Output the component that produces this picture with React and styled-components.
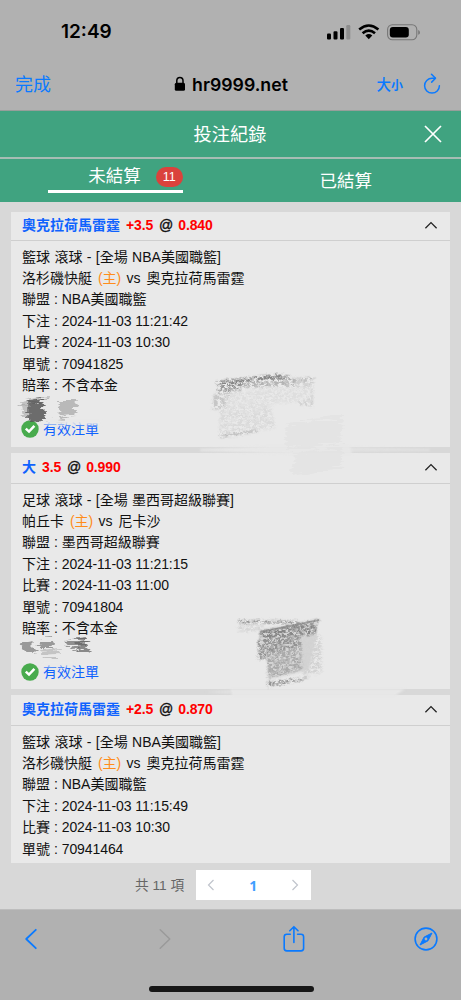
import React from "react";
import styled, { createGlobalStyle } from "styled-components";

const bets = [
  {
    team: "奧克拉荷馬雷霆",
    point: "+3.5",
    odds: "0.840",
    sport: "籃球 滾球 - [全場 NBA美國職籃]",
    home: "洛杉磯快艇",
    away: "奧克拉荷馬雷霆",
    league: "NBA美國職籃",
    betTime: "2024-11-03 11:21:42",
    gameTime: "2024-11-03 10:30",
    number: "70941825",
    head: 29,
    height: 235,
    full: true,
  },
  {
    team: "大",
    point: "3.5",
    odds: "0.990",
    sport: "足球 滾球 - [全場 墨西哥超級聯賽]",
    home: "帕丘卡",
    away: "尼卡沙",
    league: "墨西哥超級聯賽",
    betTime: "2024-11-03 11:21:15",
    gameTime: "2024-11-03 11:00",
    number: "70941804",
    head: 31,
    height: 236,
    full: true,
  },
  {
    team: "奧克拉荷馬雷霆",
    point: "+2.5",
    odds: "0.870",
    sport: "籃球 滾球 - [全場 NBA美國職籃]",
    home: "洛杉磯快艇",
    away: "奧克拉荷馬雷霆",
    league: "NBA美國職籃",
    betTime: "2024-11-03 11:15:49",
    gameTime: "2024-11-03 10:30",
    number: "70941464",
    head: 31,
    height: 168,
    full: false,
  },
];

const Chevron = () => (
  <svg width="14" height="9" viewBox="0 0 14 9">
    <path d="M1.4 7.2 L7 1.6 L12.6 7.2" fill="none" stroke="#222" strokeWidth="1.3" />
  </svg>
);

const Check = () => (
  <svg width="18" height="18" viewBox="0 0 18 18">
    <circle cx="9" cy="9" r="8.7" fill="#48ab4d" />
    <path d="M4.8 8.6 L8 11.6 L13.4 5.8" fill="none" stroke="#fff" strokeWidth="2.5" />
  </svg>
);

const BetCard = ({ bet }) => (
  <Card $height={bet.height}>
    <CardHead $height={bet.head}>
      <Pick>
        <Team>{bet.team}</Team>
        <Odds>{bet.point}</Odds>
        <At>@</At>
        <Odds>{bet.odds}</Odds>
      </Pick>
      <Chevron />
    </CardHead>
    <CardBody>
      <Line $wide>{bet.sport}</Line>
      <Line>
        {bet.home} <Home>(主)</Home> vs <Away>{bet.away}</Away>
      </Line>
      <Line>聯盟 : {bet.league}</Line>
      <Line>
        下注 : <Digits>{bet.betTime}</Digits>
      </Line>
      <Line>
        比賽 : <Digits>{bet.gameTime}</Digits>
      </Line>
      <Line>
        單號 : <Digits>{bet.number}</Digits>
      </Line>
      {bet.full && <Line>賠率 : 不含本金</Line>}
      {bet.full && (
        <Valid>
          <Check />
          <span>有效注單</span>
        </Valid>
      )}
    </CardBody>
  </Card>
);

// pencil marks rubbed over the amounts
const Scribbles = () => (
  <Marks width="461" height="708" viewBox="0 202 461 708">
    <defs>
      <filter id="grain" x="-20%" y="-20%" width="140%" height="140%">
        <feTurbulence type="fractalNoise" baseFrequency="0.28 0.45" numOctaves="3" seed="7" result="n" />
        <feColorMatrix in="n" type="matrix" values="0 0 0 0 0  0 0 0 0 0  0 0 0 0 0  0 0 0 3.6 -1.2" result="a" />
        <feGaussianBlur in="SourceGraphic" stdDeviation="0.8" result="s" />
        <feComposite in="s" in2="a" operator="in" result="g" />
        <feDisplacementMap in="g" in2="n" scale="4" xChannelSelector="G" yChannelSelector="B" result="d" />
        <feGaussianBlur in="d" stdDeviation="0.45" />
      </filter>
      <filter id="soft" x="-30%" y="-30%" width="160%" height="160%">
        <feTurbulence type="fractalNoise" baseFrequency="0.05 0.4" numOctaves="3" seed="3" result="n" />
        <feDisplacementMap in="SourceGraphic" in2="n" scale="14" xChannelSelector="R" yChannelSelector="G" result="d" />
        <feGaussianBlur in="d" stdDeviation="0.7" />
      </filter>
      <filter id="fade" x="-20%" y="-80%" width="140%" height="260%">
        <feGaussianBlur stdDeviation="1.2" />
      </filter>
    </defs>
    <g fill="#e7e7e7" filter="url(#fade)">
      <path d="M200 449 L270 446 L350 446 L352 454 L290 454 L200 451 Z" />
      <path d="M350 447 L430 449 L430 451 L350 452 Z" opacity=".6" />
      <path d="M230 689 L405 689 L395 696 L232 696 Z" />
      <path d="M205 692 L230 690 L230 694 Z" opacity=".6" />
    </g>
    <path d="M260 630 L318 620 L314 648 L309 670 L269 679 L267 657 L259 658 Z" fill="#b4b4b4" opacity=".4" filter="url(#fade)" />
    <g filter="url(#grain)">
      <path d="M217 382 L242 379 L240 391 L218 393 Z" fill="#999" />
      <path d="M217 381 L276 374 L290 376 L290 379 L240 385 L218 386 Z" fill="#858585" />
      <path d="M242 382 L314 377 L312 385 L244 388 Z" fill="#b4b4b4" />
      <path d="M296 381 L313 380 L313 407 L298 404 Z" fill="#cdcdcd" />
      <path d="M214 393 L312 386 L311 400 L230 410 L213 410 Z" fill="#dedede" />
      <path d="M213 395 L230 393 L226 408 L212 410 Z" fill="#c6c6c6" />
      <path d="M220 409 L270 406 L276 428 L219 437 Z" fill="#dadada" />
      <path d="M220 435 L256 430 L258 432 L220 438 Z" fill="#b8b8b8" />
      <path d="M238 620 L297 621 L300 623.5 L239 623.5 Z" fill="#858585" />
      <path d="M237 626 L264 625 L262 631 L239 632 Z" fill="#d6d6d6" />
      <path d="M261 631 L317 623 L316 634 L260 642 Z" fill="#868686" />
      <path d="M258 640 L308 632 L306 651 L258 660 Z" fill="#939393" />
      <path d="M267 653 L309 646 L308 668 L268 679 Z" fill="#aaa" />
      <path d="M300 636 L321 635 L322 673 L303 675 Z" fill="#d2d2d2" />
      <path d="M267 682 L310 677 L300 681 L268 687 Z" fill="#909090" />
    </g>
    <path d="M260 632 L319 619 L319 622 L300 626 L261 633 Z" fill="#707070" opacity=".75" filter="url(#grain)" />
    <path d="M260 632 L300 624 L319 620" fill="none" stroke="#808080" strokeWidth="2" opacity=".6" />
    <g fill="#dfdfdf" filter="url(#soft)" opacity=".5">
      <path d="M287 424 L342 415 L340 443 L285 450 Z" />
      <path d="M294 455 L344 445 L341 467 L292 476 Z" />
    </g>
    <g filter="url(#soft)">
      <path d="M18 402 L47 397 L46 400 L22 405 Z" fill="#bbb" />
      <path d="M28 402 L42 399 L45 420 L28 421 Z" fill="#555" opacity=".85" />
      <path d="M22 404 L30 403 L30 419 L24 419 Z" fill="#999" opacity=".5" />
      <path d="M58 400 L77 400 L75 416 L60 417 Z" fill="#aaa" opacity=".75" />
      <path d="M49 422 L67 418 L67 420 L49 423 Z" fill="#bbb" />
      <path d="M19 645 L31 643 L39 651 L28 652 Z" fill="#999" />
      <path d="M39 640 L52 639 L53 649 L41 649 Z" fill="#999" />
      <path d="M40 651 L61 649 L58 655 L43 656 Z" fill="#c4c4c4" />
      <path d="M64 641 L86 638 L87 647 L72 648 Z" fill="#909090" />
      <path d="M77 640 L88 640 L90 654 L79 650 Z" fill="#606060" opacity=".7" />
    </g>
    <path d="M42 421 L101 421 L101 425 L42 425 Z" fill="#e9e9e9" opacity=".9" filter="url(#fade)" />
    <path d="M42 662 L75 662 L75 667 L42 668 Z" fill="#e9e9e9" opacity=".6" filter="url(#fade)" />
  </Marks>
);

const App = () => {
  return (
    <Phone>
      <GlobalStyle />
      <StatusBar>
        <Time>12:49</Time>
        <svg width="96" height="20" viewBox="0 0 96 20">
          <g>
            <rect x="1" y="11.6" width="4" height="6" rx="1.1" />
            <rect x="7.5" y="9.3" width="4" height="8.3" rx="1.1" />
            <rect x="14" y="6.1" width="4" height="11.5" rx="1.1" />
            <rect x="20.3" y="3.1" width="4" height="14.5" rx="1.1" fill="#8d8d8d" />
          </g>
          <g fill="none" stroke="#000" strokeWidth="2.6">
            <path d="M33.2 7.5 Q42.8 -0.5 52.4 7.5" />
            <path d="M36.6 11.3 Q42.8 5.9 49 11.3" />
          </g>
          <path d="M39.3 13.5 Q42.8 10.6 46.3 13.5 L42.8 17.3 Z" />
          <rect x="61.6" y="2.8" width="29.2" height="15" rx="4.7" fill="none" stroke="#777" strokeWidth="1.1" />
          <rect x="63.8" y="5" width="19" height="10.6" rx="3" />
          <path d="M92.2 7.9 Q94 8.7 94 10.4 Q94 12 92.2 12.8 Z" fill="#777" />
        </svg>
      </StatusBar>
      <AddressBar>
        <Done>完成</Done>
        <Url>
          <svg width="12" height="16" viewBox="0 0 12 16">
            <rect x="0.8" y="6.8" width="10.2" height="8" rx="1.5" />
            <path d="M2.8 8 V4.8 Q2.8 1.4 5.9 1.4 Q9 1.4 9 4.8 V8" fill="none" stroke="#000" strokeWidth="1.5" />
          </svg>
          hr9999.net
        </Url>
        <Tools>
          <TextSize>
            大<small>小</small>
          </TextSize>
          <svg width="18" height="22" viewBox="0 0 18 22" fill="none" stroke="#0a7aff" strokeWidth="1.5" strokeLinecap="round" strokeLinejoin="round">
            <path d="M12.3 5.3 H9 A7.4 7.4 0 1 0 16.4 12.7" />
            <path d="M8.5 1.2 L12.5 5.3 L8.7 9.1" />
          </svg>
        </Tools>
      </AddressBar>
      <TitleBar>
        <h1>投注紀錄</h1>
        <svg width="18" height="18" viewBox="0 0 18 18">
          <path d="M1 1 L17 17 M17 1 L1 17" stroke="#fff" strokeWidth="1.7" />
        </svg>
      </TitleBar>
      <Tabs>
        <Tab $active>
          <TabLabel $active>
            未結算<Badge>11</Badge>
          </TabLabel>
        </Tab>
        <Tab>
          <TabLabel>已結算</TabLabel>
        </Tab>
      </Tabs>
      <List>
        {bets.map((bet) => (
          <BetCard key={bet.number} bet={bet} />
        ))}
        <Pagination>
          <Total>共 11 項</Total>
          <Pager>
            <svg width="8" height="12" viewBox="0 0 8 12">
              <path d="M6.5 1 L1.5 6 L6.5 11" fill="none" stroke="#c0c4cc" strokeWidth="1.2" />
            </svg>
            <b>1</b>
            <svg width="8" height="12" viewBox="0 0 8 12">
              <path d="M1.5 1 L6.5 6 L1.5 11" fill="none" stroke="#c0c4cc" strokeWidth="1.2" />
            </svg>
          </Pager>
        </Pagination>
        <Scribbles />
      </List>
      <BottomBar>
        <Actions>
          <svg width="14" height="22" viewBox="0 0 14 22">
            <path d="M11.8 1.8 L2.2 11 L11.8 20.2" fill="none" stroke="#0a7aff" strokeWidth="1.8" strokeLinecap="round" strokeLinejoin="round" />
          </svg>
          <svg width="14" height="22" viewBox="0 0 14 22">
            <path d="M2.2 1.8 L11.8 11 L2.2 20.2" fill="none" stroke="#9a9a9a" strokeWidth="1.5" strokeLinecap="round" strokeLinejoin="round" />
          </svg>
          <svg width="22" height="28" viewBox="0 0 22 28" fill="none" stroke="#0a7aff" strokeWidth="1.6" strokeLinecap="round" strokeLinejoin="round">
            <path d="M7.3 9.2 H3.8 Q1.2 9.2 1.2 11.8 V23.3 Q1.2 25.9 3.8 25.9 H18 Q20.6 25.9 20.6 23.3 V11.8 Q20.6 9.2 18 9.2 H14.6" />
            <path d="M10.9 17.4 V2 M6.8 5.8 L10.9 1.7 L15 5.8" />
          </svg>
          <svg width="24" height="24" viewBox="0 0 24 24">
            <circle cx="12" cy="12" r="10.9" fill="none" stroke="#0a7aff" strokeWidth="1.6" />
            <path d="M18 6 L13.9 13.9 L6 18 L10.1 10.1 Z" fill="#0a7aff" stroke="#0a7aff" strokeLinejoin="round" />
            <circle cx="12" cy="12" r="1.4" fill="#b1b1b1" />
          </svg>
        </Actions>
        <HomeBar />
      </BottomBar>
    </Phone>
  );
};

export default App;

const GlobalStyle = createGlobalStyle`
  body {
    margin: 0;
    background: #b1b1b1;
  }

  * {
    box-sizing: border-box;
  }

  svg {
    display: block;
    flex: none;
  }
`;

const Phone = styled.div`
  display: flex;
  flex-direction: column;
  width: 461px;
  height: 1000px;
  overflow: hidden;
  background: #b1b1b1;
  color: #111;
  font-family: "Liberation Sans", "Noto Sans CJK TC", sans-serif;
`;

const StatusBar = styled.div`
  display: flex;
  justify-content: space-between;
  align-items: center;
  height: 62px;
  padding: 1px 35px 0 61px;

  svg {
    margin-right: 4px;
  }
`;

const Time = styled.div`
  font: 600 19px Inter, sans-serif;
  color: #000;
`;

const AddressBar = styled.div`
  display: grid;
  grid-template-columns: 1fr auto 1fr;
  align-items: center;
  height: 49px;
  padding: 0 20px 4px 15px;
  border-bottom: 1px solid #969e9a;
`;

const Done = styled.div`
  padding-bottom: 2px;
  color: #0a7aff;
  font-size: 18px;
`;

const Url = styled.div`
  display: flex;
  align-items: center;
  gap: 6px;
  padding-left: 6px;
  font: 600 17.7px Inter, sans-serif;
  color: #000;
`;

const Tools = styled.div`
  display: flex;
  justify-content: flex-end;
  align-items: center;
  gap: 20px;
`;

const TextSize = styled.div`
  padding-bottom: 1px;
  color: #0a7aff;
  font-size: 14.5px;
  font-weight: 500;

  small {
    font-size: 12px;
    font-weight: 700;
  }
`;

const TitleBar = styled.div`
  display: flex;
  align-items: center;
  height: 46px;
  padding: 0 19px 0 36px;
  background: #40a380;

  h1 {
    flex: 1;
    margin: 0;
    padding-bottom: 2px;
    text-align: center;
    color: #fff;
    font-size: 18.2px;
    font-weight: 400;
  }
`;

const Tabs = styled.div`
  display: flex;
  height: 45px;
  border-top: 2px solid #a6bdb4;
  background: #40a380;
`;

const Tab = styled.div`
  display: flex;
  justify-content: center;
  align-items: ${(props) => (props.$active ? "flex-start" : "center")};
  width: 50%;
  padding-bottom: ${(props) => (props.$active ? 0 : 3)}px;
`;

const TabLabel = styled.div`
  display: flex;
  justify-content: ${(props) => (props.$active ? "flex-end" : "center")};
  align-items: center;
  width: 135px;
  height: 34px;
  color: #fff;
  font-size: 17.5px;
  font-weight: 400;
  border-bottom: ${(props) => (props.$active ? "3px solid #fff" : "none")};
`;

const Badge = styled.span`
  width: 27px;
  height: 20px;
  margin: 5px 0 0 15px;
  border-radius: 10px;
  background: #da423c;
  text-align: center;
  font-size: 12.5px;
  line-height: 20px;
`;

const List = styled.div`
  position: relative;
  display: flex;
  flex-direction: column;
  gap: 6px;
  height: 708px;
  padding: 10px 11px 0;
  border-bottom: 1px solid #bdbdbd;
  background: #d8d8d8;
`;

const Card = styled.div`
  flex: none;
  height: ${(props) => props.$height}px;
  overflow: hidden;
  background: #e9e9e9;
`;

const CardHead = styled.div`
  display: flex;
  justify-content: space-between;
  align-items: center;
  height: ${(props) => props.$height}px;
  padding: 0 12px 2px 11px;
  border-bottom: 1px solid #cfcfcf;
`;

const Pick = styled.div`
  display: flex;
  align-items: center;
  gap: 6px;
  font-size: 14px;
  line-height: 20px;
`;

const Team = styled.span`
  color: #0f62fe;
  font-weight: 700;
`;

const Odds = styled.span`
  color: #f00;
  font-weight: 700;
  letter-spacing: -0.15px;
`;

const At = styled.span`
  margin-right: -1px;
  -webkit-text-stroke: 0.4px #111;
`;

const CardBody = styled.div`
  padding: 5.5px 11px 0;
`;

const Line = styled.div`
  height: 21.45px;
  font-size: 14px;
  line-height: 21.45px;
  white-space: pre;
  word-spacing: ${(props) => (props.$wide ? 0.5 : 0)}px;
`;

const Digits = styled.span`
  letter-spacing: -0.08px;
`;

const Home = styled.span`
  margin: 0 1.5px 0 2px;
  color: #ff8c1a;
`;

const Away = styled.span`
  margin-left: 2px;
`;

const Valid = styled.div`
  display: flex;
  align-items: center;
  gap: 4px;
  margin: 22.5px 0 0 -1px;
  font-size: 14px;
  line-height: 20px;
  color: #0f62fe;
`;

const Marks = styled.svg`
  position: absolute;
  top: 0;
  left: 0;
  pointer-events: none;
`;

const Pagination = styled.div`
  display: flex;
  align-items: center;
  gap: 12px;
  margin-top: 1px;
  padding-left: 124px;
`;

const Total = styled.div`
  padding-bottom: 2px;
  color: #666;
  font-size: 13.7px;
`;

const Pager = styled.div`
  display: flex;
  justify-content: space-between;
  align-items: center;
  width: 115px;
  height: 30px;
  padding: 0 12px 0 11px;
  background: #fff;

  b {
    color: #409eff;
    font: 700 14px "Open Sans", sans-serif;
  }
`;

const BottomBar = styled.div`
  display: flex;
  flex-direction: column;
  justify-content: space-between;
  align-items: center;
  height: 90px;
  padding: 15px 23px 8px 24px;
`;

const Actions = styled.div`
  display: grid;
  grid-template-columns: 134px 125px 1fr auto;
  align-items: center;
  width: 100%;
`;

const HomeBar = styled.div`
  width: 165px;
  height: 6px;
  border-radius: 3px;
  background: #171717;
`;
